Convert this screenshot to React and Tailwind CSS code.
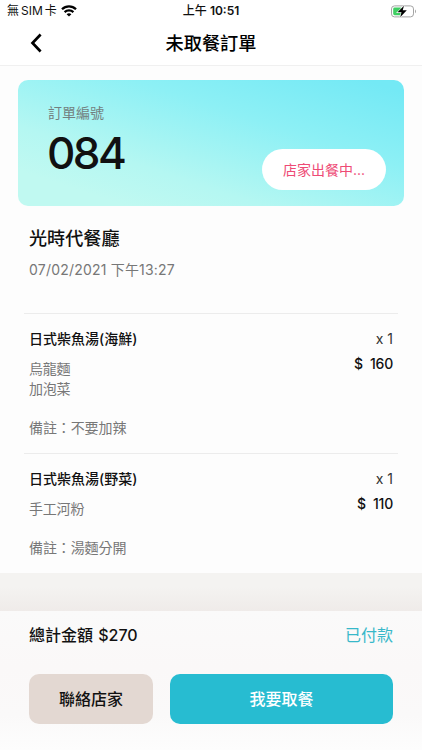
const items = [
  { name: '日式柴魚湯(海鮮)', options: ['烏龍麵', '加泡菜'], note: '備註：不要加辣', qty: 'x 1', price: '160' },
  { name: '日式柴魚湯(野菜)', options: ['手工河粉'], note: '備註：湯麵分開', qty: 'x 1', price: '110' },
];

function StatusBar() {
  return (
    <div className="grid h-[22px] grid-cols-[1fr_auto_1fr] items-center pl-[7px] pr-[5px] text-[12px] leading-[22px] text-[#111]">
      <div className="flex items-center gap-[4px]">
        <span className="whitespace-pre text-[12px]">無<span className="mx-[2px]">SIM</span>卡</span>
        <svg width="16" height="12" viewBox="0 0 16 12" fill="none" stroke="#000" strokeWidth="2.3">
          <path d="M1 4.3C4.9.5 11.1.5 15 4.3" />
          <path d="M3.6 7.2c2.5-2.4 6.3-2.4 8.8 0" />
          <path d="M8 11.6 5.6 9.2c1.4-1.3 3.4-1.3 4.8 0z" fill="#000" stroke="none" />
        </svg>
      </div>
      <span className="-translate-x-px text-[12px] font-medium">上午 <span className="font-semibold">10:51</span></span>
      <svg className="justify-self-end" width="26" height="13" viewBox="0 0 26 13">
        <rect x="0.5" y="0.9" width="22" height="11" rx="3" fill="#fff" stroke="#a3a3a3" />
        <rect x="2.2" y="2.6" width="8.5" height="7.6" rx="1.4" fill="#3fce62" />
        <path d="M24 4.6c1.3.5 1.3 3.1 0 3.6z" fill="#a3a3a3" />
        <path d="M13 .8 6.5 7.3h4L9.2 12.2l6.6-6.9h-4.1z" fill="#000" stroke="#fff" strokeWidth="1.2" paintOrder="stroke" />
      </svg>
    </div>
  );
}

function OrderCard() {
  return (
    <section className="mx-[18px] mt-[14px] flex h-[126px] shrink-0 justify-between rounded-[10px] bg-[linear-gradient(18deg,#c0f9f1_14%,#b4f7f2_32%,#8df0f5_65%,#74e9f5_95%)] pl-[30px] pr-[18px]">
      <div className="pt-[23px]">
        <div className="text-[14px] leading-5 text-[#737f80]">訂單編號</div>
        <div className="-ml-px mt-[4px] text-[44px] font-medium leading-[52px] tracking-[-2.6px] text-[#111]">084</div>
      </div>
      <div className="mb-[16px] flex h-[41px] w-[124px] items-center justify-center self-end rounded-full bg-white text-[14px] text-[#ee4a75]">店家出餐中...</div>
    </section>
  );
}

function OrderItem({ item }) {
  return (
    <article className="mx-[24px] flex justify-between border-t border-[#ececec] px-[5px] pt-[15px]">
      <div className="text-[14px] leading-5 text-[#777]">
        <h3 className="mb-[10px] font-medium text-[#111]">{item.name}</h3>
        {item.options.map((o) => <p key={o} className="tracking-[-0.2px]">{o}</p>)}
        <p className="mt-[19px] tracking-[-0.1px]">{item.note}</p>
      </div>
      <div className="text-right text-[14px] leading-5 text-[#333]">
        <p>{item.qty}</p>
        <p className="mt-[5px] font-medium tracking-[-0.2px] text-[#111]">$<span className="ml-[7px]">{item.price}</span></p>
      </div>
    </article>
  );
}

export default function App() {
  return (
    <div lang="zh-TW" className="flex h-[750px] w-[422px] flex-col overflow-hidden bg-[#fdfdfd] font-['Inter','Noto_Sans_CJK_TC',sans-serif]">
      <div className="h-[66px] shrink-0 border-b border-[#f0f0f0] bg-white">
        <StatusBar />
        <header className="grid h-[42px] grid-cols-[1fr_auto_1fr] items-center">
          <svg className="ml-[30px]" width="13" height="20" viewBox="0 0 13 20" fill="none" stroke="#000" strokeWidth="2.7">
            <path d="M10.6 1.5 2.5 10l8.1 8.5" />
          </svg>
          <h1 className="text-[18.2px] font-medium leading-6 text-black">未取餐訂單</h1>
        </header>
      </div>
      <OrderCard />
      <section className="h-[107px] shrink-0 px-[29px] pt-[20px]">
        <h2 className="text-[18.1px] font-medium leading-6 text-[#111]">光時代餐廳</h2>
        <p className="mt-[10px] text-[14px] leading-5 tracking-[0.2px] text-[#777]">07/02/2021 下午13:27</p>
      </section>
      <div className="h-[140px] shrink-0"><OrderItem item={items[0]} /></div>
      <div className="h-[120px] shrink-0"><OrderItem item={items[1]} /></div>
      <div className="h-[38px] shrink-0 bg-[linear-gradient(#f4f3f1_35%,#efebe9)]" />
      <footer className="flex-1 bg-[linear-gradient(#fafafa,#faf8f8_40%,#faf9f9_75%,#fdfdfd)] px-[29px] pt-[12px]">
        <div className="flex justify-between text-[16px] leading-6">
          <span className="font-medium text-[#111]">總計金額 <span className="ml-px">$270</span></span>
          <span className="text-[#37b8c9]">已付款</span>
        </div>
        <div className="mt-[27px] flex gap-[17px]">
          <button className="h-[50px] w-[124px] rounded-[10px] bg-[#e3d8d2] text-[16px] font-medium text-[#111]">聯絡店家</button>
          <button className="h-[50px] flex-1 rounded-[10px] bg-[#27bcd1] text-[16px] font-medium text-white">我要取餐</button>
        </div>
      </footer>
    </div>
  );
}
